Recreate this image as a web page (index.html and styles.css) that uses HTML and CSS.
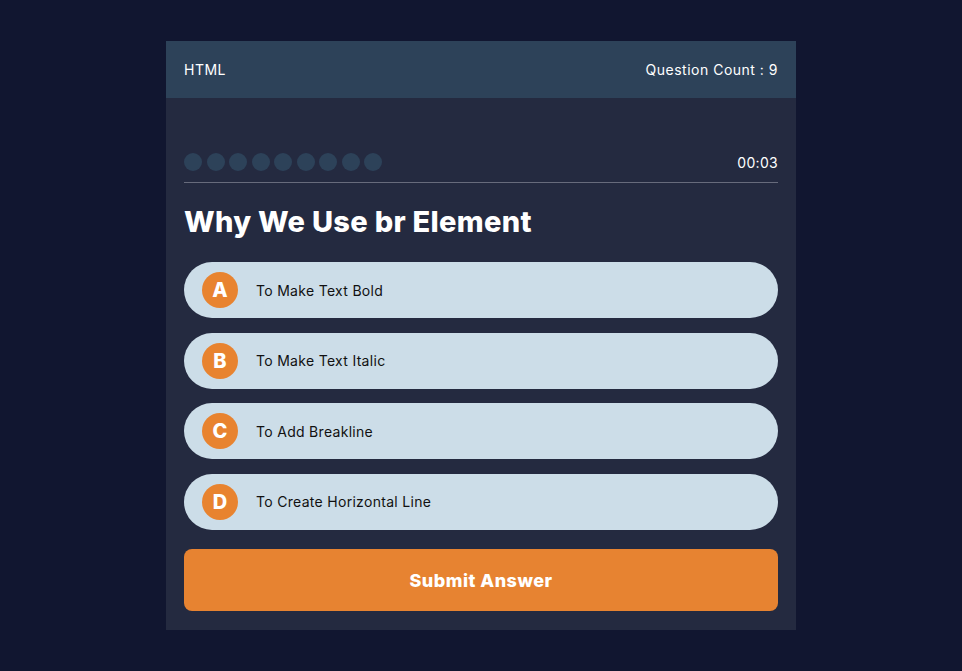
FILE: index.html
```html
<!DOCTYPE html>
<html lang="en">
<head>
<meta charset="utf-8">
<title>Quiz</title>
<link rel="stylesheet" href="styles.css">
</head>
<body>
<div class="quiz">
  <header class="quiz-header">
    <span class="topic">HTML</span>
    <span class="count">Question Count : 9</span>
  </header>
  <main class="quiz-body">
    <div class="progress">
      <div class="dots">
        <span class="dot"></span><span class="dot"></span><span class="dot"></span>
        <span class="dot"></span><span class="dot"></span><span class="dot"></span>
        <span class="dot"></span><span class="dot"></span><span class="dot"></span>
      </div>
      <span class="timer">00:03</span>
    </div>
    <h1 class="question">Why We Use br Element</h1>
    <ul class="options">
      <li class="option"><span class="letter">A</span><span class="label">To Make Text Bold</span></li>
      <li class="option"><span class="letter">B</span><span class="label">To Make Text Italic</span></li>
      <li class="option"><span class="letter">C</span><span class="label">To Add Breakline</span></li>
      <li class="option"><span class="letter">D</span><span class="label">To Create Horizontal Line</span></li>
    </ul>
    <button class="submit">Submit Answer</button>
  </main>
</div>
</body>
</html>
```
FILE: styles.css
```css
* { box-sizing: border-box; }
html, body { margin: 0; padding: 0; }
body {
  background: #111630;
  font-family: "Inter", "Open Sans", sans-serif;
  color: #fff;
  min-height: 671px;
  padding-top: 41px;
}
.quiz {
  width: 630px;
  margin: 0 auto;
  background: #242a40;
}
.quiz-header {
  height: 57px;
  background: #2d4259;
  display: flex;
  align-items: center;
  justify-content: space-between;
  padding: 0 18px;
  font-size: 14px;
  letter-spacing: 0.5px;
}
.quiz-body {
  padding: 55px 18px 19px;
}
.progress {
  display: flex;
  align-items: center;
  justify-content: space-between;
  padding-bottom: 11px;
  border-bottom: 1px solid #676b7c;
}
.dots { display: flex; gap: 4.5px; }
.dot {
  width: 18px; height: 18px; border-radius: 50%;
  background: #2d4259;
}
.timer { font-size: 14px; letter-spacing: 0.3px; }
.question {
  margin: 22px 0 23px;
  font-size: 29px;
  font-weight: 800;
  letter-spacing: 0.3px;
  line-height: 34px;
}
.options {
  list-style: none; margin: 0; padding: 0;
  display: flex; flex-direction: column; gap: 14.5px;
}
.option {
  height: 56px;
  background: #ccdde8;
  border-radius: 28px;
  display: flex; align-items: center;
  padding-left: 18px;
  color: #111;
  font-size: 14px;
  letter-spacing: 0.3px;
}
.letter {
  width: 36px; height: 36px; border-radius: 50%;
  background: #e8832f; color: #fff;
  display: flex; align-items: center; justify-content: center;
  font-size: 20px; font-weight: 800;
  letter-spacing: 0;
  margin-right: 18px;
}
.submit {
  display: block;
  width: 100%;
  height: 62px;
  margin-top: 19.5px;
  border: 0;
  border-radius: 8px;
  background: #e78331;
  color: #fff;
  font-family: inherit;
  font-size: 18px;
  font-weight: 800;
  letter-spacing: 0.5px;
}
```
